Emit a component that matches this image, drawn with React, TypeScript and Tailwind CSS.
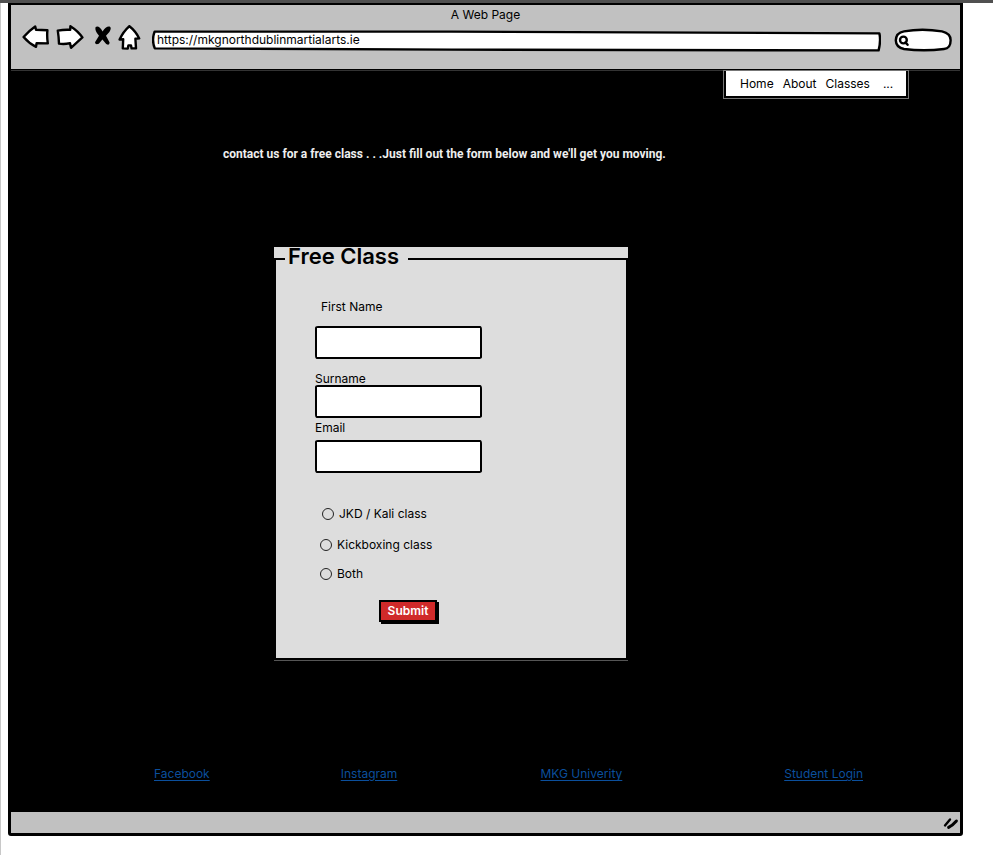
import type { ReactNode } from "react";

const navLinks = ["Home", "About", "Classes"];
const footerLinks = ["Facebook", "Instagram", "MKG Univerity", "Student Login"];

const sketchBorder =
  "border-2 border-black bg-white rounded-[3px_2px_4px_2px/2px_4px_2px_4px] outline-none";

function IconButton({ label, children }: { label: string; children: ReactNode }) {
  return (
    <button type="button" aria-label={label} className="block shrink-0">
      {children}
    </button>
  );
}

function BrowserBar() {
  return (
    <header className="border-b border-black bg-[#c1c1c1]">
      <h1 className="text-center text-xs leading-5 font-normal">A Web Page</h1>
      <div className="flex h-[44px] items-start pr-[8px] pl-[11px]">
        <IconButton label="Back">
          <svg width="28" height="26" viewBox="0 0 28 26" fill="#fff" stroke="#000" strokeWidth="2.4" strokeLinejoin="round">
            <path d="M1.6 12 Q7 5.6 13.2 1.4 L14 4.8 L25.4 5.2 Q24.8 12 25.8 18.4 L14.6 18.2 L14 21.8 Q7 18.4 1.6 12Z" />
          </svg>
        </IconButton>
        <IconButton label="Forward">
          <svg className="ml-[6px]" width="28" height="26" viewBox="0 0 28 26" fill="#fff" stroke="#000" strokeWidth="2.4" strokeLinejoin="round">
            <path d="M1.8 5.6 Q8 4.4 14.2 4.8 L14.4 1.2 Q22 6 26.4 12.4 L15 22.8 L14 18.2 Q8 19.6 3 18.6 Q2.8 12 1.8 5.6Z" />
          </svg>
        </IconButton>
        <IconButton label="Stop">
          <svg className="ml-[10px]" width="18" height="22" viewBox="0 0 18 22" fill="#000">
            <path d="M1.6 2 Q5 0 8.6 6.6 Q12 1 15.6 1.6 Q18 3 15.4 7 L12 10.8 L15.6 17.6 Q15.6 20.8 12.2 19 L8.4 14.4 L4.8 18.8 Q1.2 20.2 1 17.2 L5 10.8 Q0.4 5.6 1.6 2Z" />
          </svg>
        </IconButton>
        <IconButton label="Home">
          <svg className="ml-[6px]" width="24" height="26" viewBox="0 0 24 26" fill="#fff" stroke="#000" strokeWidth="2.4" strokeLinejoin="round">
            <path d="M11.4 1.2 Q17.6 6 21.2 13.4 L17.4 13.8 L18 23.4 L13.6 23.4 L13 20.4 L10.4 20.4 L9.8 23.6 L4.8 23.4 L5.2 14.2 L1.6 14.6 Q5 7 11.4 1.2Z" />
          </svg>
        </IconButton>
        <div className="relative mt-[5px] ml-[10px] h-[22px] min-w-0 flex-1">
          <svg className="absolute inset-0 h-full w-full" viewBox="0 0 730 22" preserveAspectRatio="none" fill="#fff" stroke="#000" strokeWidth="2.4" strokeLinejoin="round">
            <path d="M2.6 1.6 L300 1.6 L728.4 3.4 Q730 11 727.6 20.4 L300 19.6 L2.8 18.4 Q-0.6 10 2.6 1.6Z" />
          </svg>
          <input
            aria-label="Address"
            type="text"
            defaultValue="https://mkgnorthdublinmartialarts.ie"
            className="relative block h-[19px] w-full bg-transparent pl-[5px] text-xs outline-none"
          />
        </div>
        <div className="relative mt-[3px] ml-[13px] h-6 w-[58px] shrink-0">
          <svg className="absolute inset-0" width="58" height="24" viewBox="0 0 58 24" fill="#fff" stroke="#000" strokeWidth="2.4">
            <path d="M10 3.4 Q28 0 48 3.4 Q56.6 5.4 56.6 12 Q56.8 20.4 50 21 Q30 23.4 10 21 Q2 19.4 1.8 12.4 Q2 4.8 10 3.4Z" />
            <circle cx="9.4" cy="12" r="3.4" />
            <path d="M11.4 14.4 L13.6 16.8" strokeLinecap="round" />
          </svg>
          <input aria-label="Search" type="text" className="relative block h-6 w-full bg-transparent pr-2 pl-4 text-xs outline-none" />
        </div>
      </div>
    </header>
  );
}

function SiteNav() {
  return (
    <nav className="mr-[52px] ml-auto flex h-[27px] w-[184px] items-center gap-[9px] border-2 border-t-0 border-black bg-white pl-[14px] text-xs outline outline-1 outline-[#777]">
      {navLinks.map((name) => (
        <a key={name} href="#">
          {name}
        </a>
      ))}
      <a href="#" aria-label="More" className="ml-1">
        ...
      </a>
    </nav>
  );
}

function Field({ id, label, type, className }: { id: string; label: string; type: string; className: string }) {
  return (
    <div className={`flex flex-col ${className}`}>
      <label htmlFor={id}>{label}</label>
      <input id={id} type={type} className={`h-[33px] w-[167px] px-2 ${sketchBorder}`} />
    </div>
  );
}

function Choice({ label, className }: { label: string; className: string }) {
  return (
    <label className={`flex h-4 items-center gap-[5px] ${className}`}>
      <input
        type="radio"
        name="class"
        className="size-3 appearance-none rounded-full border border-[#222] checked:bg-black"
      />
      {label}
    </label>
  );
}

function FreeClassForm() {
  return (
    <form className="ml-[263px] w-[354px] border-b border-[#555] bg-[#ddd] text-xs leading-4">
      <fieldset className="h-[413px] min-w-0 border-2 border-black">
        <legend className="ml-[9px] h-6 pr-[9px] pl-[3px] text-[22px] leading-[18px] font-semibold">Free Class</legend>
        <div className="pt-[28px] pl-[39px]">
          <Field id="first" label="First Name" type="text" className="gap-[11px] [&>label]:pl-[6px]" />
          <Field id="surname" label="Surname" type="text" className="mt-3 [&>label]:h-[14px]" />
          <Field id="email" label="Email" type="email" className="mt-[2px] gap-1" />
          <Choice label="JKD / Kali class" className="mt-[33px] pl-[7px]" />
          <Choice label="Kickboxing class" className="mt-[15px] pl-[5px]" />
          <Choice label="Both" className="mt-[13px] pl-[5px]" />
          <button
            type="submit"
            className="mt-[18px] ml-[64px] h-[22px] w-[58px] border-2 border-black bg-[#d02a2a] font-semibold text-white shadow-[2px_2px_0_#000]"
          >
            Submit
          </button>
        </div>
      </fieldset>
    </form>
  );
}

export default function App() {
  return (
    <div className="border-t-[3px] border-[#505050] bg-white font-['Inter','Liberation_Sans',sans-serif] text-black">
      <div className="border-l border-[#c8c8c8] pr-[30px] pb-5 pl-[7px]">
        <div className="rounded-b-[3px] border-x-[3px] border-t-2 border-b-[3px] border-black">
          <BrowserBar />
          <main className="border-t border-[#333] bg-black">
            <SiteNav />
            <p className="mt-[46px] pl-[212px] font-['Roboto','Liberation_Sans',sans-serif] text-xs leading-5 font-bold text-[#eee]">
              contact us for a free class . . .Just fill out the form below and we'll get you moving.
            </p>
            <div className="pt-[83px] pb-[103px]">
              <FreeClassForm />
            </div>
            <div className="grid grid-cols-[187fr_200fr_244fr_176fr] pb-[28px] pl-[143px] text-xs leading-5 text-[#0b4f9c]">
              {footerLinks.map((name) => (
                <a key={name} href="#" className="justify-self-start underline underline-offset-2">
                  {name}
                </a>
              ))}
            </div>
          </main>
          <footer className="flex h-[21px] items-center justify-end bg-[#c1c1c1] pr-px">
            <svg width="16" height="14" viewBox="0 0 16 14" stroke="#000" strokeLinecap="round" fill="none">
              <path d="M2 9.4 L7 3.4" strokeWidth="2.4" />
              <path d="M5.6 11.4 Q9.6 9.4 13.4 5" strokeWidth="3" />
            </svg>
          </footer>
        </div>
      </div>
    </div>
  );
}
